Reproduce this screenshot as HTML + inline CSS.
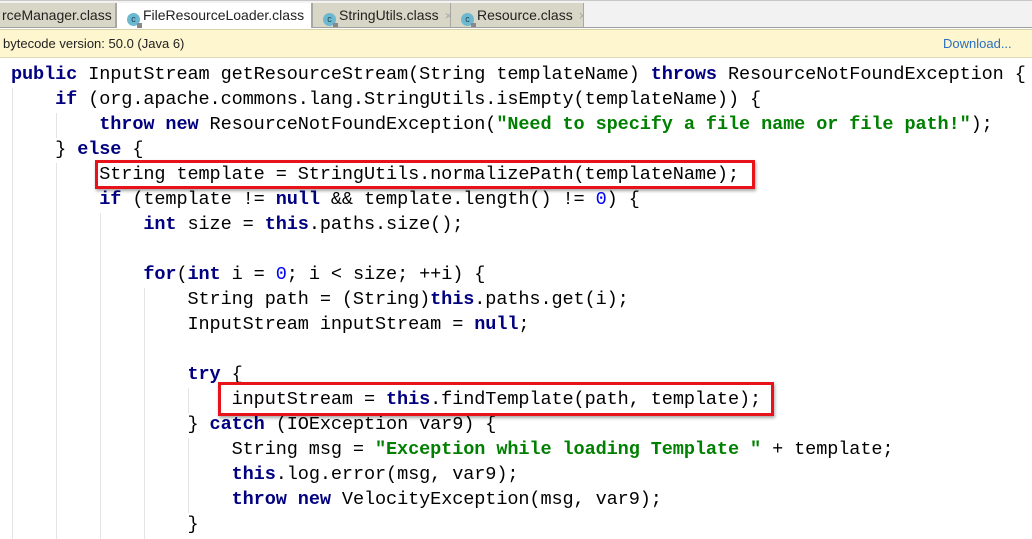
<!DOCTYPE html>
<html><head><meta charset="utf-8"><style>
body{margin:0;width:1032px;height:539px;overflow:hidden;background:#fff;position:relative;font-family:"Liberation Sans",sans-serif}
.tabbar{position:absolute;left:0;top:0;width:1032px;height:26px;background:#f2f2f2;border-top:1px solid #c8c8c8;border-bottom:1px solid #a0a0a0}
.tab{position:absolute;top:2px;height:24px;background:#d8d6c6;border-right:1px solid #a8a8a0;border-left:1px solid #a8a8a0;font-size:14px;line-height:24px;color:#222;white-space:nowrap;overflow:hidden}
.tab.act{background:#fff;height:25px}
.x{color:#aaa;margin-left:6px;font-size:13px}
.ic{display:inline-block;width:13px;height:13px;border-radius:50%;background:#6cb8d0;color:#245;font-size:9px;line-height:13px;text-align:center;vertical-align:-2px;margin:0 3px 0 10px;position:relative}
.ic:after{content:"";position:absolute;right:-2px;bottom:-2px;width:5px;height:5px;background:#888}
.info{position:absolute;left:0;top:29px;width:1032px;height:27px;background:#fdf6cf;border-top:1px solid #d8d2a8;border-bottom:1px solid #e0dab8;font-size:13px;line-height:27px;color:#222}
.dl{position:absolute;left:943px;top:0;color:#2a70c0}
pre{position:absolute;left:11px;top:62px;margin:0;font-family:"Liberation Mono",monospace;font-size:18.56px;letter-spacing:-0.1px;line-height:25px;color:#000}
b{color:#000080}
.s{color:#008000;font-weight:bold}
.n{color:#0000ff}
.box{position:absolute;border:3px solid #e8121a;box-shadow:1px 2px 3px rgba(0,0,0,.35)}
.g{position:absolute;width:1px;background:#e4e4e4}
</style></head><body>
<div class="tabbar">
<div class="tab" style="left:-1px;width:115px"><span style="margin-left:2px">rceManager.class</span><span class="x">×</span></div>
<div class="tab act" style="left:116px;width:194px"><span class="ic">c</span>FileResourceLoader.class<span class="x">×</span></div>
<div class="tab" style="left:312px;width:137px"><span class="ic">c</span>StringUtils.class<span class="x">×</span></div>
<div class="tab" style="left:450px;width:132px"><span class="ic">c</span>Resource.class<span class="x">×</span></div>
</div>
<div class="info"><span style="margin-left:3px">bytecode version: 50.0 (Java 6)</span><span class="dl">Download...</span></div>
<div class="g" style="left:12px;top:88px;height:451px"></div>
<div class="g" style="left:56px;top:113px;height:25px"></div>
<div class="g" style="left:56px;top:163px;height:376px"></div>
<div class="g" style="left:100px;top:213px;height:326px"></div>
<div class="g" style="left:144px;top:288px;height:251px"></div>
<div class="g" style="left:188px;top:388px;height:25px"></div>
<div class="g" style="left:188px;top:438px;height:75px"></div>
<pre><b>public</b> InputStream getResourceStream(String templateName) <b>throws</b> ResourceNotFoundException {
    <b>if</b> (org.apache.commons.lang.StringUtils.isEmpty(templateName)) {
        <b>throw new</b> ResourceNotFoundException(<span class="s">"Need to specify a file name or file path!"</span>);
    } <b>else</b> {
        String template = StringUtils.normalizePath(templateName);
        <b>if</b> (template != <b>null</b> &amp;&amp; template.length() != <span class="n">0</span>) {
            <b>int</b> size = <b>this</b>.paths.size();

            <b>for</b>(<b>int</b> i = <span class="n">0</span>; i &lt; size; ++i) {
                String path = (String)<b>this</b>.paths.get(i);
                InputStream inputStream = <b>null</b>;

                <b>try</b> {
                    inputStream = <b>this</b>.findTemplate(path, template);
                } <b>catch</b> (IOException var9) {
                    String msg = <span class="s">"Exception while loading Template "</span> + template;
                    <b>this</b>.log.error(msg, var9);
                    <b>throw new</b> VelocityException(msg, var9);
                }
</pre>
<div class="box" style="left:95px;top:160px;width:654px;height:23px"></div>
<div class="box" style="left:218px;top:382px;width:550px;height:28px"></div>
</body></html>
